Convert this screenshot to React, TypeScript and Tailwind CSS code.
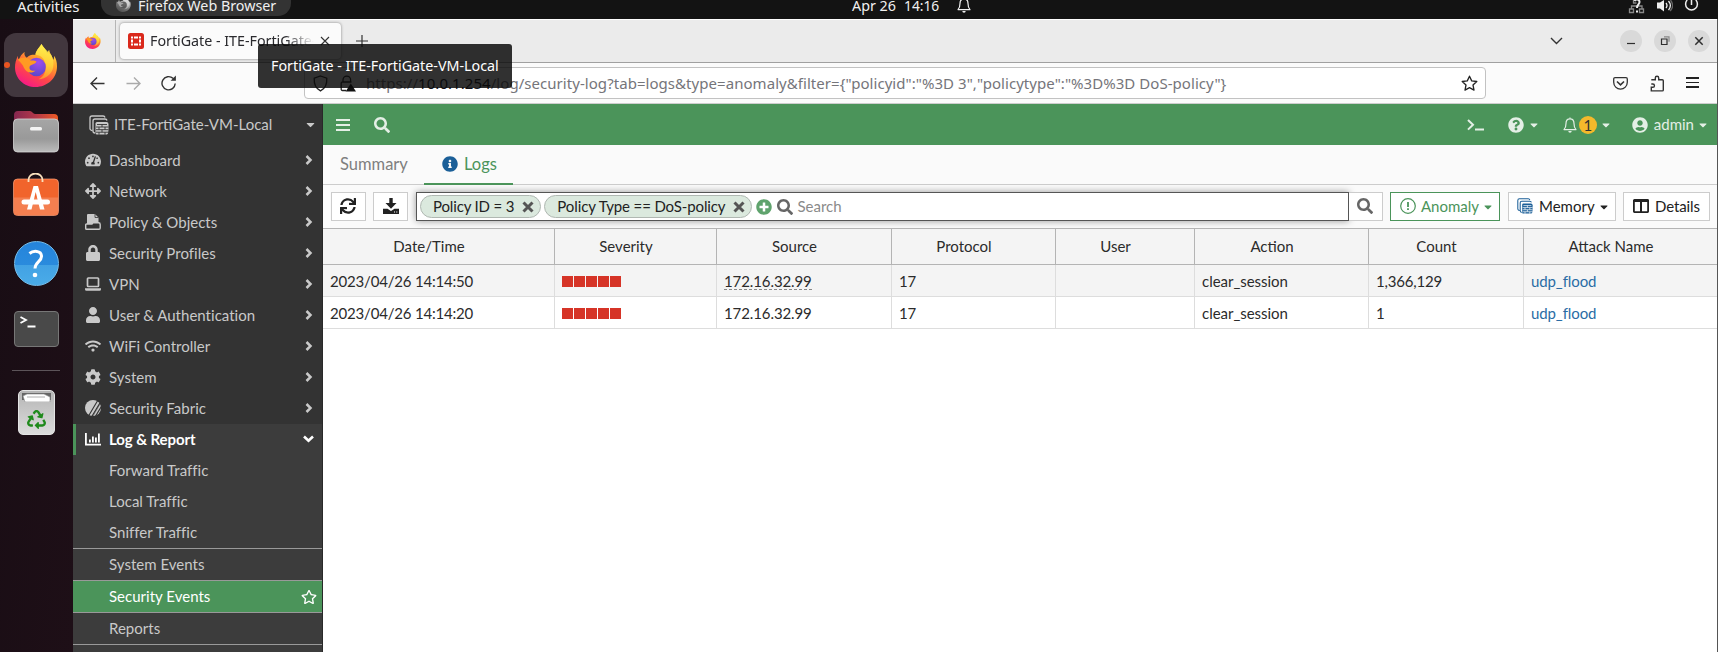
import type { ReactNode } from "react";
import {
  FaTachometerAlt, FaArrowsAlt, FaLock, FaUser, FaWifi, FaCog,
  FaSearch, FaInfoCircle, FaSync, FaPlusCircle, FaCaretDown, FaQuestionCircle,
  FaUserCircle, FaRegStar, FaRecycle,
} from "react-icons/fa";

const UI = "font-['Noto_Sans',sans-serif]";

/* ---------- drawings ---------- */

function Firefox({ size, gray = false }: { size: number; gray?: boolean }) {
  const id = gray ? "g" : "c";
  return (
    <svg width={size} height={size} viewBox="0 0 44 44" className={gray ? "grayscale" : ""}>
      <defs>
        <linearGradient id={"body" + id} x1="0.8" y1="0" x2="0.25" y2="1">
          <stop offset="0" stopColor="#fff44f" />
          <stop offset="0.35" stopColor="#ffa22a" />
          <stop offset="0.65" stopColor="#ff4a45" />
          <stop offset="1" stopColor="#f5158c" />
        </linearGradient>
        <linearGradient id={"tail" + id} x1="0.6" y1="0" x2="0.5" y2="1">
          <stop offset="0" stopColor="#fff44f" />
          <stop offset="0.6" stopColor="#ffd53a" />
          <stop offset="1" stopColor="#ff9a2a" />
        </linearGradient>
        <radialGradient id={"globe" + id} cx="0.6" cy="0.25" r="0.8">
          <stop offset="0" stopColor="#a04cf0" />
          <stop offset="1" stopColor="#5548c8" />
        </radialGradient>
      </defs>
      <path d="M27 0c-2 4-6 7-6 11 0 0-6-1-9 3-2-1-3-4-2-6-3 2-5 5-6 8-1-1-1-3-1-4-2 4-3 8-3 12 0 11 9 20 21 20s22-9 22-21c0-5-1-8-3-11 0 2 0 3-1 4-1-4-4-7-4-10-1 1-2 3-2 4-1-4-4-7-6-10z" fill={`url(#body${id})`} />
      <path d="M27 0c-2 4-6 7-6 11 5 0 9 4 10 9 2 8-2 14-7 16 8 0 14-6 15-12 1-5 0-9-2-13l-2-1c-2-4-6-6-8-10z" fill={`url(#tail${id})`} opacity="0.85" />
      <circle cx="22" cy="23.500" r="9.500" fill={`url(#globe${id})`} />
      <path d="M3 16c4-3 10-3 13 1 2 0 5 0 6 1-1 3-6 3-7 5-1 4 3 5 6 4-4 4-10 2-12-3-1-3-3-5-6-8z" fill="#ff9a22" />
    </svg>
  );
}

function FilesIcon() {
  return (
    <svg width="46" height="42" viewBox="0 0 46 42">
      <defs>
        <linearGradient id="ff" x1="0" x2="1"><stop offset="0" stopColor="#84274f" /><stop offset="0.5" stopColor="#b3384a" /><stop offset="1" stopColor="#ee5a24" /></linearGradient>
        <linearGradient id="fg" x1="0" y1="0" x2="0" y2="1"><stop offset="0" stopColor="#a6a6a6" /><stop offset="0.6" stopColor="#999" /><stop offset="1" stopColor="#bcbcbc" /></linearGradient>
      </defs>
      <path d="M1 4a4 4 0 0 1 4-4h12c2 0 3 3 5 3h19a4 4 0 0 1 4 4v10H1z" fill="url(#ff)" />
      <rect x="0.500" y="8" width="45" height="33" rx="4" fill="url(#fg)" stroke="#d5d5d5" strokeWidth="0.800" />
      <rect x="17" y="16" width="12" height="3.500" rx="1.500" fill="#f4f4f4" />
    </svg>
  );
}

function StoreIcon() {
  return (
    <svg width="46" height="43" viewBox="0 0 46 43">
      <rect x="0.500" y="6" width="45" height="36.500" rx="4" fill="#f1642c" stroke="#f9a27c" strokeWidth="0.700" />
      <path d="M1 24.500h44V38a4 4 0 0 1-4 4H5a4 4 0 0 1-4-4z" fill="#f47f50" />
      <path d="M15.500 9V7a7 6.500 0 0 1 14 0v2" fill="none" stroke="#f9e0bd" strokeWidth="1.800" />
      <path d="M14 36.500L20.500 13h4.500L31.500 36.500h-4.500L22.700 19 18.500 36.500z" fill="#fff" />
      <rect x="8.500" y="26.500" width="28.500" height="5" rx="2.500" fill="#fff" />
    </svg>
  );
}

function TrashIcon() {
  return (
    <div className="relative flex h-[45px] w-[37px] items-center justify-center rounded-[5px] border border-[#e4e4e4] bg-linear-to-b from-[#b5b5b5] to-[#dcdcdc]">
      <svg className="absolute top-[2px] left-[3px]" width="30" height="9" viewBox="0 0 30 9">
        <path d="M0 0h29v7H0z" fill="#666" />
        <path d="M1 3l4-2h17l6 3v5H3z" fill="#fff" stroke="#888" strokeWidth="0.600" />
        <path d="M5 4h18" stroke="#999" strokeWidth="0.800" />
      </svg>
      <FaRecycle className="mt-[13px] size-[19px] text-[#1f8a1c]" />
    </div>
  );
}

/** Stacked firewall outline used for the device and for the log storage. */
function StackIcon({ size = 20, tile = "#333" }: { size?: number; tile?: string }) {
  return (
    <svg width={size} height={size} viewBox="0 0 20 20" fill="none" stroke="currentColor">
      <path d="M3.500 15.500H3a2 2 0 0 1-2-2V3a2 2 0 0 1 2-2h11a2 2 0 0 1 2 1.500" strokeWidth="1.300" />
      <path d="M6 18a2 2 0 0 1-2-2V6a2 2 0 0 1 2-2h10a2 2 0 0 1 2 1.500" strokeWidth="1.300" />
      <path d="M8 19.500a1.500 1.500 0 0 1-1.500-1.500V8.500A1.500 1.500 0 0 1 8 7h9.500a2 2 0 0 1 2 2v6l-.5 3.500-1 1z" fill="currentColor" stroke="none" />
      <path d="M8 9.500h10M7 12h12.500M7 14.700h12.500M7 17.200h12.500M13 9.500v2.500M10 12v2.700M16 12v2.700M13 14.700v2.500M10 17.200v2.500M16 17.200v2.500" stroke={tile} strokeWidth="0.900" />
    </svg>
  );
}

const PolicyIcon = () => (
  <svg width="16" height="16" viewBox="0 0 16 16" fill="currentColor">
    <path d="M3 0h7l3.500 3.500V9H8L6.500 11H2V1a1 1 0 0 1 1-1z" />
    <path d="M10 0v3.500h3.500" fill="none" stroke="#333" strokeWidth="0.800" />
    <path d="M8 8.800h5.500a1.700 1.700 0 0 1 1.700 1.700v3.500a1.200 1.200 0 0 1-1.200 1.200H1.500a.8.800 0 0 1-.8-.8v-3.600a.8.800 0 0 1 .8-.8H7z" fill="#333" stroke="currentColor" strokeWidth="1.400" />
  </svg>
);
const LaptopIcon = () => (
  <svg width="16" height="14" viewBox="0 0 16 14" fill="none" stroke="currentColor">
    <rect x="2.500" y="1" width="11" height="8.500" rx="0.800" strokeWidth="1.700" />
    <path d="M0 11.300h16v1a1.500 1.500 0 0 1-1.500 1.500h-13A1.500 1.500 0 0 1 0 12.300z" fill="currentColor" stroke="none" />
  </svg>
);
const FabricIcon = () => (
  <svg width="16" height="16" viewBox="0 0 16 16">
    <circle cx="8" cy="8" r="8" fill="currentColor" />
    <path d="M3.500 16L13 0M6.500 17L15.500 2M10 17L17 5.500" stroke="#333" strokeWidth="1.100" />
    <path d="M8 16L15 4" stroke="#333" strokeWidth="0.500" />
  </svg>
);
const ChartIcon = () => (
  <svg width="16" height="13" viewBox="0 0 16 13" fill="currentColor">
    <path d="M0 0h1.800v10.800H16V12.500H0z" />
    <path d="M4 6.500h1.800v3H4zM7 3.500h1.800v6H7zM10 4.500h1.800v5H10zM13 0.500h1.800v9H13z" />
  </svg>
);
const DownloadIcon = () => (
  <svg width="16" height="16" viewBox="0 0 16 16" fill="#222">
    <path d="M6.300 0h3.400v5h3.800L8 10.700 2.500 5h3.800z" />
    <path d="M0 10.800h4.500L8 13l3.500-2.200H16V16H0z" />
    <path d="M11 13.600h1v1h-1zM13.300 13.600h1v1h-1z" fill="#fff" />
  </svg>
);
const Bell = ({ className }: { className: string }) => (
  <svg className={className} viewBox="0 0 14 16" fill="none" stroke="currentColor" strokeWidth="1.200">
    <path d="M7 0.500v1M1 12.600c1.700-1.500 2-3.300 2-6C3 3.700 4.800 1.900 7 1.900s4 1.800 4 4.700c0 2.700.3 4.500 2 6z" strokeLinejoin="round" />
    <path d="M5.300 14h3.400A1.700 1.700 0 0 1 5.300 14z" fill="currentColor" stroke="none" />
  </svg>
);
const ChevRight = () => (
  <svg className="ml-auto" width="8" height="10" viewBox="0 0 8 10" fill="none" stroke="currentColor" strokeWidth="2.500"><path d="M1.500 1l4 4-4 4" /></svg>
);
const ChevDown = () => (
  <svg className="ml-auto" width="11" height="8" viewBox="0 0 11 8" fill="none" stroke="currentColor" strokeWidth="2.600"><path d="M1 1.500l4.500 4.200L10 1.500" /></svg>
);

/* ---------- desktop ---------- */

function TopBar() {
  return (
    <div className={`relative flex h-[19px] bg-[#131313] text-[14.300px] leading-[12px] text-[#f0f0f0] ${UI}`}>
      <span className="ml-[17px] w-[84px] text-[15px]">Activities</span>
      <div className="flex h-[16px] w-[190px] rounded-b-[13px] bg-[#333] pl-[15px]">
        <div className="-mt-[3px] h-[16px] w-[22px]"><Firefox size={15} gray /></div>
        <span className="whitespace-nowrap">Firefox Web Browser</span>
      </div>
      <span className="ml-[561px] w-[52px] whitespace-nowrap">Apr 26</span>
      <span className="w-[53px] text-[13.800px]">14:16</span>
      <Bell className="-mt-[4px] h-[18px] w-[14px]" />
      <div className="ml-auto flex items-start gap-[11px] pr-[19px]">
        <svg width="18" height="14" viewBox="0 0 18 14" fill="none" stroke="#888" strokeWidth="1.300">
          <path d="M1.500 9h4v3.500h-4zM11.500 9h4v3.500h-4zM3.500 9V6h10.500v3M5.500 0v3h3" />
          <path d="M6.500 1c1-2 5-2 5 1 0 2.500-2.500 2.500-2.500 6M9 10.500v2" stroke="#eee" strokeWidth="2" />
        </svg>
        <svg width="16" height="12" viewBox="0 0 16 12" fill="none" stroke="#eee" strokeWidth="1.300">
          <path d="M0 2.500h3L7 0v11.500L3 8.500H0z" fill="#eee" stroke="none" />
          <path d="M9 3c1.200 1.500 1.200 3.500 0 5M11.500 1c2.500 3 2.500 6 0 9" />
          <path d="M13.500 0c3 4 2.500 8-.5 11" stroke="#666" />
        </svg>
        <svg width="15" height="12" viewBox="0 0 15 12" fill="none" stroke="#eee" strokeWidth="1.500">
          <path d="M7.500-1v6M3.200 0a5.900 5.900 0 1 0 8.600 0" />
        </svg>
      </div>
    </div>
  );
}

function Dock() {
  return (
    <div className="flex w-[73px] shrink-0 flex-col items-center bg-linear-to-br from-[#180d14] to-[#1e0f17]">
      <div className="relative mt-[14px] flex w-full items-center pl-[4px]">
        <div className="flex size-[64px] items-center justify-center rounded-[12px] bg-[#42373e]">
          <Firefox size={43} />
        </div>
        <div className="absolute left-[4px] size-[6px] rounded-full bg-[#e95420]" />
      </div>
      <div className="mt-[14px] ml-[-1px] h-[42px]"><FilesIcon /></div>
      <div className="mt-[20px] ml-[-1px] h-[43px]"><StoreIcon /></div>
      <div className="mt-[25px] ml-[-1px] flex size-[45px] items-center justify-center rounded-full border border-[#75bdea] bg-[linear-gradient(#2584db_0%,#2a8bdd_54%,#42a2e4_54%,#4aace8_100%)]">
        <svg width="16" height="30" viewBox="0 0 16 30" fill="none" stroke="#fff" strokeWidth="3">
          <path d="M1.500 4.500C5 1.500 13.500 1 13.500 7.500c0 5-6.500 5.500-6.500 12" />
          <circle cx="7" cy="26" r="2.300" fill="#fff" stroke="none" />
        </svg>
      </div>
      <div className="mt-[25px] ml-[-1px] h-[36px] w-[45px] rounded-[4px] border border-[#777] bg-[#494949]">
        <svg width="43" height="34" viewBox="0 0 43 34" fill="none" stroke="#fff" strokeWidth="1.800">
          <path d="M5.500 5l5.500 3-5.500 3M12.500 14.500h8" />
        </svg>
      </div>
      <div className="mt-[23px] ml-[-1px] h-px w-[48px] bg-[#5c5459]" />
      <div className="mt-[19px] ml-[-1px]"><TrashIcon /></div>
    </div>
  );
}

/* ---------- browser ---------- */

const WinBtn = ({ children }: { children: ReactNode }) => (
  <div className="flex size-[22px] items-center justify-center rounded-full bg-[#d9d9d9]">
    <svg width="10" height="10" viewBox="0 0 10 10" fill="none" stroke="#2e2e2e" strokeWidth="1.200">{children}</svg>
  </div>
);

function TabStrip() {
  return (
    <div className={`flex h-[44px] items-center border-t border-b border-t-white border-b-[#a0a0a0] bg-[#ebebeb] ${UI}`}>
      <div className="flex h-full w-[43px] items-center justify-center border-r border-[#b5b5b5]">
        <div className="-ml-[3px]"><Firefox size={16} /></div>
      </div>
      <div className="ml-[4px] flex h-[36px] w-[221px] items-center rounded-[4px] bg-[#fbfbfb] pl-[8px] shadow-[0_0_3px_rgba(0,0,0,0.45)]">
        <svg width="16" height="16" viewBox="0 0 16 16">
          <rect width="16" height="16" rx="2.500" fill="#da291c" />
          <path d="M3 3.500h2v2H3zM6 3.500h4v2H6zM11 3.500h2v2h-2zM3 6.500h2v3H3zM11 6.500h2v3h-2zM3 10.500h2v2H3zM6 10.500h4v2H6zM11 10.500h2v2h-2z" fill="#fff" />
        </svg>
        <div className="ml-[6px] w-[164px] overflow-hidden text-[14.300px] tracking-[-0.020px] whitespace-nowrap text-[#2a2a2e] [mask-image:linear-gradient(to_right,black_135px,transparent_164px)]">
          FortiGate - ITE-FortiGate-VM-Local
        </div>
        <svg className="ml-[6px]" width="10" height="10" viewBox="0 0 10 10" stroke="#333" strokeWidth="1.100"><path d="M1 1l8 8M9 1l-8 8" /></svg>
      </div>
      <svg className="ml-[15px]" width="12" height="12" viewBox="0 0 12 12" stroke="#333" strokeWidth="1.200"><path d="M6 0v12M0 6h12" /></svg>
      <div className="ml-auto flex items-center gap-[12px] pr-[7px]">
        <svg className="mr-[45px]" width="13" height="8" viewBox="0 0 13 8" fill="none" stroke="#333" strokeWidth="1.400"><path d="M1 1l5.500 5.500L12 1" /></svg>
        <WinBtn><path d="M1 7.500h8" /></WinBtn>
        <WinBtn><path d="M1.500 3h5.500v5.500H1.500z" /><path d="M4 .8h5v5" stroke="#888" /></WinBtn>
        <WinBtn><path d="M1.300 1.300l7.400 7.400M8.700 1.300l-7.400 7.400" strokeWidth="1.500" /></WinBtn>
      </div>
    </div>
  );
}

function UrlBar() {
  return (
    <div className={`flex h-[41px] items-center border-b border-[#cdcdcd] bg-[#fbfbfb] ${UI}`}>
      <svg className="ml-[17px]" width="15" height="13" viewBox="0 0 15 13" fill="none" stroke="#333" strokeWidth="1.400"><path d="M14.500 6.500H1M7 .5l-6 6 6 6" /></svg>
      <svg className="ml-[21px]" width="15" height="13" viewBox="0 0 15 13" fill="none" stroke="#aaa" strokeWidth="1.400"><path d="M.5 6.500H14M8 .5l6 6-6 6" /></svg>
      <svg className="ml-[20px]" width="16" height="16" viewBox="0 0 16 16" fill="none" stroke="#333" strokeWidth="1.400"><path d="M14.200 8.500A6.600 6.600 0 1 1 12 3.300l1.500 1.500" /><path d="M14.900 0.500v5.300H9.600z" fill="#333" stroke="none" /></svg>
      <div className="ml-[127px] flex h-[32px] w-[1182px] items-center rounded-[4px] border border-[#c2c2c2] bg-white pr-[7px] pl-[8px]">
        <svg width="15" height="17" viewBox="0 0 15 17" fill="none" stroke="#222" strokeWidth="1.300"><path d="M7.500 1l6.300 2.200c.3 5.500-1 10-6.300 12.700C2.200 13.200.9 8.700 1.200 3.200z" /></svg>
        <svg className="ml-[12px]" width="16" height="17" viewBox="0 0 16 17" fill="none" stroke="#222" strokeWidth="1.300">
          <path d="M3 7V5a3.800 3.800 0 0 1 7.600 0v2M6 15.500H2.500A1.300 1.300 0 0 1 1.200 14V8.500A1.300 1.300 0 0 1 2.500 7h9" />
          <path d="M10.800 8.500l5.200 8H5.600z" fill="#111" stroke="none" />
        </svg>
        <span className="ml-[10px] text-[15px] tracking-[0.050px] whitespace-nowrap text-[#75757a]">
          https://<span className="text-[#15141a]">10.0.1.254</span>
          {'/log/security-log?tab=logs&type=anomaly&filter={"policyid":"%3D 3","policytype":"%3D%3D DoS-policy"}'}
        </span>
        <svg className="ml-auto" width="17" height="17" viewBox="0 0 17 17" fill="none" stroke="#222" strokeWidth="1.300" strokeLinejoin="round"><path d="M8.500 1.200l2.200 4.700 5.100.6-3.800 3.500 1 5.100-4.500-2.500L4 15.100l1-5.100L1.200 6.500l5.100-.6z" /></svg>
      </div>
      <div className="ml-auto flex items-center gap-[21px] pr-[18px]">
        <svg width="15" height="13" viewBox="0 0 15 13" fill="none" stroke="#333" strokeWidth="1.300"><path d="M2 .7h11a1.300 1.300 0 0 1 1.300 1.300v3.300a6.800 6.800 0 0 1-13.600 0V2A1.300 1.300 0 0 1 2 .7z" /><path d="M4 4.500l3.500 3.300L11 4.500" strokeWidth="1.600" /></svg>
        <svg width="16" height="17" viewBox="0 0 16 17" fill="none" stroke="#333" strokeWidth="1.400"><path d="M2.300 4.700h4V2.900a1.700 1.700 0 0 1 3.400 0v1.800h3.600a1 1 0 0 1 1 1v9.200a1 1 0 0 1-1 1H2.300v-3.600h1.500a1.500 1.500 0 0 0 0-3.300H2.300" /></svg>
        <svg className="-mt-px" width="13" height="11" viewBox="0 0 13 11" stroke="#222" strokeWidth="1.300" shapeRendering="crispEdges"><path d="M0 1h13M0 5.500h13M0 10h13" /></svg>
      </div>
    </div>
  );
}

/* ---------- FortiGate ---------- */

const NAV: [string, ReactNode][] = [
  ["Dashboard", <FaTachometerAlt className="size-[16px]" />],
  ["Network", <FaArrowsAlt className="size-[16px]" />],
  ["Policy & Objects", <PolicyIcon />],
  ["Security Profiles", <FaLock className="size-[16px]" />],
  ["VPN", <LaptopIcon />],
  ["User & Authentication", <FaUser className="size-[16px]" />],
  ["WiFi Controller", <FaWifi className="size-[16px]" />],
  ["System", <FaCog className="size-[16px]" />],
  ["Security Fabric", <FabricIcon />],
];

function Sidebar() {
  return (
    <div className="flex w-[250px] shrink-0 flex-col border-r border-[#292929] bg-[#333] text-[15px] leading-[18px] tracking-[0.020px] text-[#c9c9c9]">
      <div className="flex h-[41px] shrink-0 items-center pr-[5px] pl-[16px]">
        <StackIcon />
        <span className="ml-[5px] pb-px tracking-normal">ITE-FortiGate-VM-Local</span>
        <FaCaretDown className="ml-auto size-[13px]" />
      </div>
      {NAV.map(([label, icon]) => (
        <div key={label} className="flex h-[31px] shrink-0 items-center pr-[9px] pb-px pl-[12px]">
          <div className="flex w-[16px] justify-center">{icon}</div>
          <span className="ml-[8px] pb-px">{label}</span>
          <ChevRight />
        </div>
      ))}
      <div className="flex min-h-0 flex-1 flex-col bg-[#3c3c3c]">
        <div className="flex h-[31px] shrink-0 items-center border-l-3 border-[#4b945a] pr-[8px] pb-px pl-[9px] font-bold text-white">
          <ChartIcon />
          <span className="ml-[8px] pb-px tracking-[-0.080px]">Log &amp; Report</span>
          <ChevDown />
        </div>
        {["Forward Traffic", "Local Traffic", "Sniffer Traffic"].map((t) => (
          <div key={t} className="flex h-[31px] shrink-0 items-center pb-[2px] pl-[36px]">{t}</div>
        ))}
        <div className="flex h-[32px] shrink-0 items-center border-t border-[#999] pb-[2px] pl-[36px]">System Events</div>
        <div className="flex h-[33px] shrink-0 items-center border-y border-[#999] bg-[#4b945a] pr-[5px] pl-[36px] text-white">
          <span className="pb-[2px]">Security Events</span>
          <FaRegStar className="ml-auto size-[16px]" />
        </div>
        <div className="flex h-[32px] shrink-0 items-center border-b border-[#999] pb-[2px] pl-[36px]">Reports</div>
      </div>
    </div>
  );
}

function Header() {
  return (
    <div className="flex h-[41px] shrink-0 items-center bg-[#4b945a] pr-[8px] pl-[13px] text-[15px] leading-[18px] text-[#e4efe6]">
      <svg width="14" height="12" viewBox="0 0 14 12" stroke="currentColor" strokeWidth="2"><path d="M0 1h14M0 6h14M0 11h14" /></svg>
      <FaSearch className="ml-[24px] size-[16px]" />
      <svg className="ml-auto" width="17" height="12" viewBox="0 0 17 12" fill="none" stroke="currentColor" strokeWidth="2"><path d="M1 1l5 4.800-5 4.800M8 10.500h9" /></svg>
      <FaQuestionCircle className="ml-[24px] size-[16px]" />
      <FaCaretDown className="ml-[4px] size-[12px]" />
      <Bell className="ml-[23px] h-[16px] w-[14px]" />
      <span className="ml-[2px] flex size-[18px] items-center justify-center rounded-full bg-[#f5b92b] text-[#333]">1</span>
      <FaCaretDown className="ml-[3px] size-[12px]" />
      <FaUserCircle className="ml-[20px] size-[16px]" />
      <span className="ml-[6px] pb-px">admin</span>
      <FaCaretDown className="ml-[3px] size-[12px]" />
    </div>
  );
}

const Chip = ({ children }: { children: ReactNode }) => (
  <span className="flex h-[23px] items-center rounded-full border border-[#b0b8b2] bg-[#dbe9de] pr-[6px] pl-[12px] whitespace-nowrap text-[#222]">
    {children}
    <svg className="ml-[8px]" width="12" height="12" viewBox="0 0 12 12" stroke="#555" strokeWidth="3"><path d="M1.500 1.500l9 9M10.500 1.500l-9 9" /></svg>
  </span>
);

function Toolbar() {
  return (
    <div className="flex h-[43px] shrink-0 items-start bg-[#fafafa] pt-[7px] pr-[7px] pl-[8px] text-[15px] leading-[18px] text-[#222]">
      <div className="flex h-[29px] w-[35px] items-center justify-center border border-[#ccc] bg-white pb-px"><FaSync className="-ml-px size-[16px]" /></div>
      <div className="ml-[7px] flex h-[29px] w-[35px] items-center justify-center border border-[#ccc] bg-white pb-px"><DownloadIcon /></div>
      <div className="ml-[8px] flex h-[29px] w-[933px] items-center border border-[#555] bg-white pl-[3px] shadow-[0_0_7px_rgba(0,0,0,0.4)]">
        <Chip><span className="pb-[2px] tracking-[-0.150px]">Policy ID = 3</span></Chip>
        <span className="w-[3px]" />
        <Chip><span className="pb-[2px] tracking-[-0.120px]">Policy Type == DoS-policy</span></Chip>
        <FaPlusCircle className="ml-[4px] size-[16px] text-[#5fa36d]" />
        <FaSearch className="ml-[5px] size-[16px] text-[#666]" />
        <span className="ml-[4px] pb-[2px] text-[#8a8a8a]">Search</span>
      </div>
      <div className="flex h-[29px] w-[34px] items-center justify-center border border-l-0 border-[#ccc] bg-white pr-px pb-px"><FaSearch className="size-[16px] text-[#666]" /></div>
      <div className="ml-[7px] flex h-[29px] w-[110px] items-center border border-[#4b945a] bg-white pl-[9px] text-[#4b945a]">
        <svg className="-mt-px" width="16" height="16" viewBox="0 0 16 16" fill="none" stroke="currentColor"><circle cx="8" cy="8" r="7.300" strokeWidth="1.200" /><path d="M8 4v5M8 10.300v1.700" strokeWidth="1.800" /></svg>
        <span className="ml-[5px] pb-[2px]">Anomaly</span>
        <FaCaretDown className="ml-[3px] size-[12px]" />
      </div>
      <div className="ml-[8px] flex h-[29px] w-[108px] items-center border border-[#ccc] bg-white pl-[8px]">
        <span className="-mt-px text-[#1b5f98]"><StackIcon size={16} tile="#fff" /></span>
        <span className="ml-[6px] pb-[2px]">Memory</span>
        <FaCaretDown className="ml-[3px] size-[12px]" />
      </div>
      <div className="ml-[7px] flex h-[29px] w-[87px] items-center border border-[#ccc] bg-white pl-[9px]">
        <svg className="-mt-px" width="16" height="14" viewBox="0 0 16 14" fill="none" stroke="#222" strokeWidth="1.800"><rect x=".9" y=".9" width="14.200" height="12.200" rx="0.500" /><path d="M8 1v12M0 2h16" strokeWidth="2" /></svg>
        <span className="ml-[6px] pb-[2px] tracking-[-0.100px]">Details</span>
      </div>
    </div>
  );
}

const GRID = "grid grid-cols-[232px_162px_175px_164px_139px_174px_155px_1fr]";
const HEADS = ["Date/Time", "Severity", "Source", "Protocol", "User", "Action", "Count", "Attack Name"];
const ROWS = [
  { time: "2023/04/26 14:14:50", count: "1,366,129", hover: true },
  { time: "2023/04/26 14:14:20", count: "1", hover: false },
];

function LogTable() {
  return (
    <div className="text-[15px] leading-[18px] text-[#2b2b2b]">
      <div className={`${GRID} h-[37px] border-y border-[#b4b4b4] bg-[#f4f4f4]`}>
        {HEADS.map((h) => (
          <div key={h} className="flex items-center justify-center border-r border-[#b4b4b4] pr-[19px] pb-[2px] last:border-r-0">{h}</div>
        ))}
      </div>
      {ROWS.map((r) => (
        <div key={r.time} className={`${GRID} h-[32px] ${r.hover ? "bg-[#f4f4f4]" : "bg-white"} border-b border-[#ddd] [&>div]:flex [&>div]:items-center [&>div]:border-r [&>div]:border-[#ddd] [&>div]:pl-[7px] [&>div:last-child]:border-r-0`}>
          <div className="tracking-[-0.190px]">{r.time}</div>
          <div className="gap-px pt-[2px]">
            {[0, 1, 2, 3, 4].map((i) => <span key={i} className="size-[11px] bg-[#d63427]" />)}
          </div>
          <div className="tracking-[-0.100px]">
            <span className={r.hover ? "h-[18px] border-b border-dashed border-[#888]" : "h-[18px]"}>172.16.32.99</span>
          </div>
          <div className="tracking-[-0.190px]">17</div>
          <div />
          <div className="tracking-[-0.030px]">clear_session</div>
          <div className="tracking-[-0.190px]">{r.count}</div>
          <div className="tracking-[-0.100px] text-[#2a6ca5]">udp_flood</div>
        </div>
      ))}
    </div>
  );
}

export default function App() {
  return (
    <div className="relative flex h-[652px] w-[1718px] flex-col overflow-hidden bg-white font-['Lato',sans-serif]">
      <TopBar />
      <div className="flex min-h-0 flex-1">
        <Dock />
        <div className="flex min-w-0 flex-1 flex-col border-r border-[#555]">
          <TabStrip />
          <UrlBar />
          <div className="flex min-h-0 flex-1">
            <Sidebar />
            <div className="flex min-w-0 flex-1 flex-col bg-white">
              <Header />
              <div className="flex h-[40px] shrink-0 border-b border-[#ccc] bg-[#fafafa] text-[16.500px]">
                <div className="flex w-[101px] items-center pl-[17px] text-[#7f7f7f]">Summary</div>
                <div className="-mb-px flex w-[89px] items-center border-b-2 border-[#4b945a] pl-[18px] text-[#4b945a]">
                  <FaInfoCircle className="mr-[6px] size-[16px] text-[#1b5f98]" />
                  Logs
                </div>
              </div>
              <Toolbar />
              <LogTable />
            </div>
          </div>
        </div>
      </div>
      <div className={`absolute top-[44px] left-[258px] flex h-[44px] w-[254px] items-center rounded-[3px] bg-[rgba(10,10,10,0.84)] pl-[13px] text-[14.300px] whitespace-nowrap text-white ${UI}`}>
        FortiGate - ITE-FortiGate-VM-Local
      </div>
    </div>
  );
}
